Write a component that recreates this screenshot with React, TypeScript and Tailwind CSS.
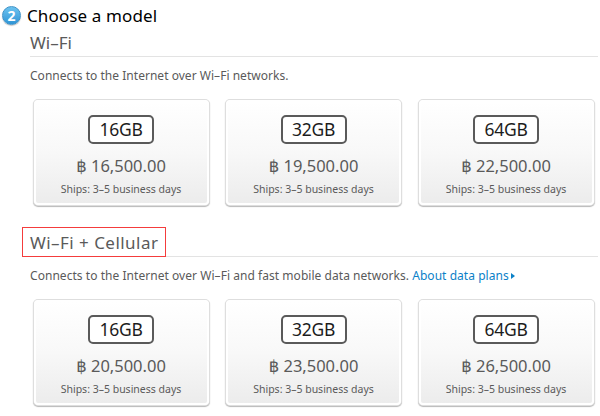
interface Model {
  size: string;
  price: string;
}

const wifiModels: Model[] = [
  { size: "16GB", price: "16,500.00" },
  { size: "32GB", price: "19,500.00" },
  { size: "64GB", price: "22,500.00" },
];

const cellularModels: Model[] = [
  { size: "16GB", price: "20,500.00" },
  { size: "32GB", price: "23,500.00" },
  { size: "64GB", price: "26,500.00" },
];

function ModelCard({ size, price }: Model) {
  return (
    <button
      type="button"
      className="flex h-[105px] w-[175px] flex-col items-center rounded-[4px] border-2 border-white bg-linear-to-b from-white via-[#f8f8f8] to-[#ececec] pt-[13px] shadow-[0_0_0_1px_#dedede,0_1px_1px_1px_#b8b8b8]"
    >
      <span className="flex h-[29px] w-[66px] items-center justify-center rounded-[5px] border-2 border-[#5a5a5a] bg-white text-[17.5px] leading-none tracking-[-0.3px] text-[#1c1c1c]">
        {size}
      </span>
      <span className="mt-[10px] text-[16.5px] leading-[24px] whitespace-nowrap text-[#5a5a5a]">
        ฿ {price}
      </span>
      <span className="mt-[2px] text-[10.5px] leading-[18px] whitespace-nowrap text-[#5a5a5a]">
        Ships: 3–5 business days
      </span>
    </button>
  );
}

function ModelRow({ models }: { models: Model[] }) {
  return (
    <div className="ml-[3.5px] flex w-[560px] justify-between">
      {models.map((model) => (
        <ModelCard key={model.size} {...model} />
      ))}
    </div>
  );
}

export default function App() {
  return (
    <main className="h-[416px] w-[600px] overflow-hidden bg-white font-['Noto_Sans','DejaVu_Sans',sans-serif]">
      <header className="flex h-[31px] items-center gap-[6px] pl-[2px]">
        <span className="flex size-[19px] items-center justify-center rounded-full border border-[#3f93c8] bg-linear-to-b from-[#6bc3f0] to-[#2f95d6] text-[14px] leading-none font-bold text-white shadow-[0_1px_1px_#c5c5c5]">
          2
        </span>
        <h1 className="text-[17px] leading-[31px] tracking-[0.12px] text-black">Choose a model</h1>
      </header>

      <section className="ml-[30px] h-[196px] w-[568px]">
        <h2 className="h-[26px] border-b border-[#e3e3e3] text-[17px] leading-[23px] text-[#5a5a5a]">Wi–Fi</h2>
        <p className="mb-[14px] h-[29px] pt-[8px] text-[12px] leading-[22px] tracking-[0.03px] text-[#5a5a5a]">
          Connects to the Internet over Wi–Fi networks.
        </p>
        <ModelRow models={wifiModels} />
      </section>

      <section className="ml-[30px] w-[568px]">
        <div className="flex h-[30px] items-end">
          <h2 className="-ml-[8px] h-[30px] w-[144px] border border-[#f43c3c] pl-[7px] text-[17px] leading-[30px] tracking-[0.46px] whitespace-nowrap text-[#5a5a5a]">
            Wi–Fi + Cellular
          </h2>
          <div className="h-px flex-1 bg-[#e3e3e3]" />
        </div>
        <p className="mb-[14px] h-[29px] pt-[8px] text-[12px] leading-[22px] tracking-[0.045px] whitespace-nowrap text-[#5a5a5a]">
          Connects to the Internet over Wi–Fi and fast mobile data networks.{" "}
          <a href="#" className="inline-flex items-center text-[#0b81c8]">
            About data plans
            <svg width="4" height="6" viewBox="0 0 4 6" className="ml-[2px] fill-current">
              <path d="M0 0 4 3 0 6Z" />
            </svg>
          </a>
        </p>
        <ModelRow models={cellularModels} />
      </section>
    </main>
  );
}
